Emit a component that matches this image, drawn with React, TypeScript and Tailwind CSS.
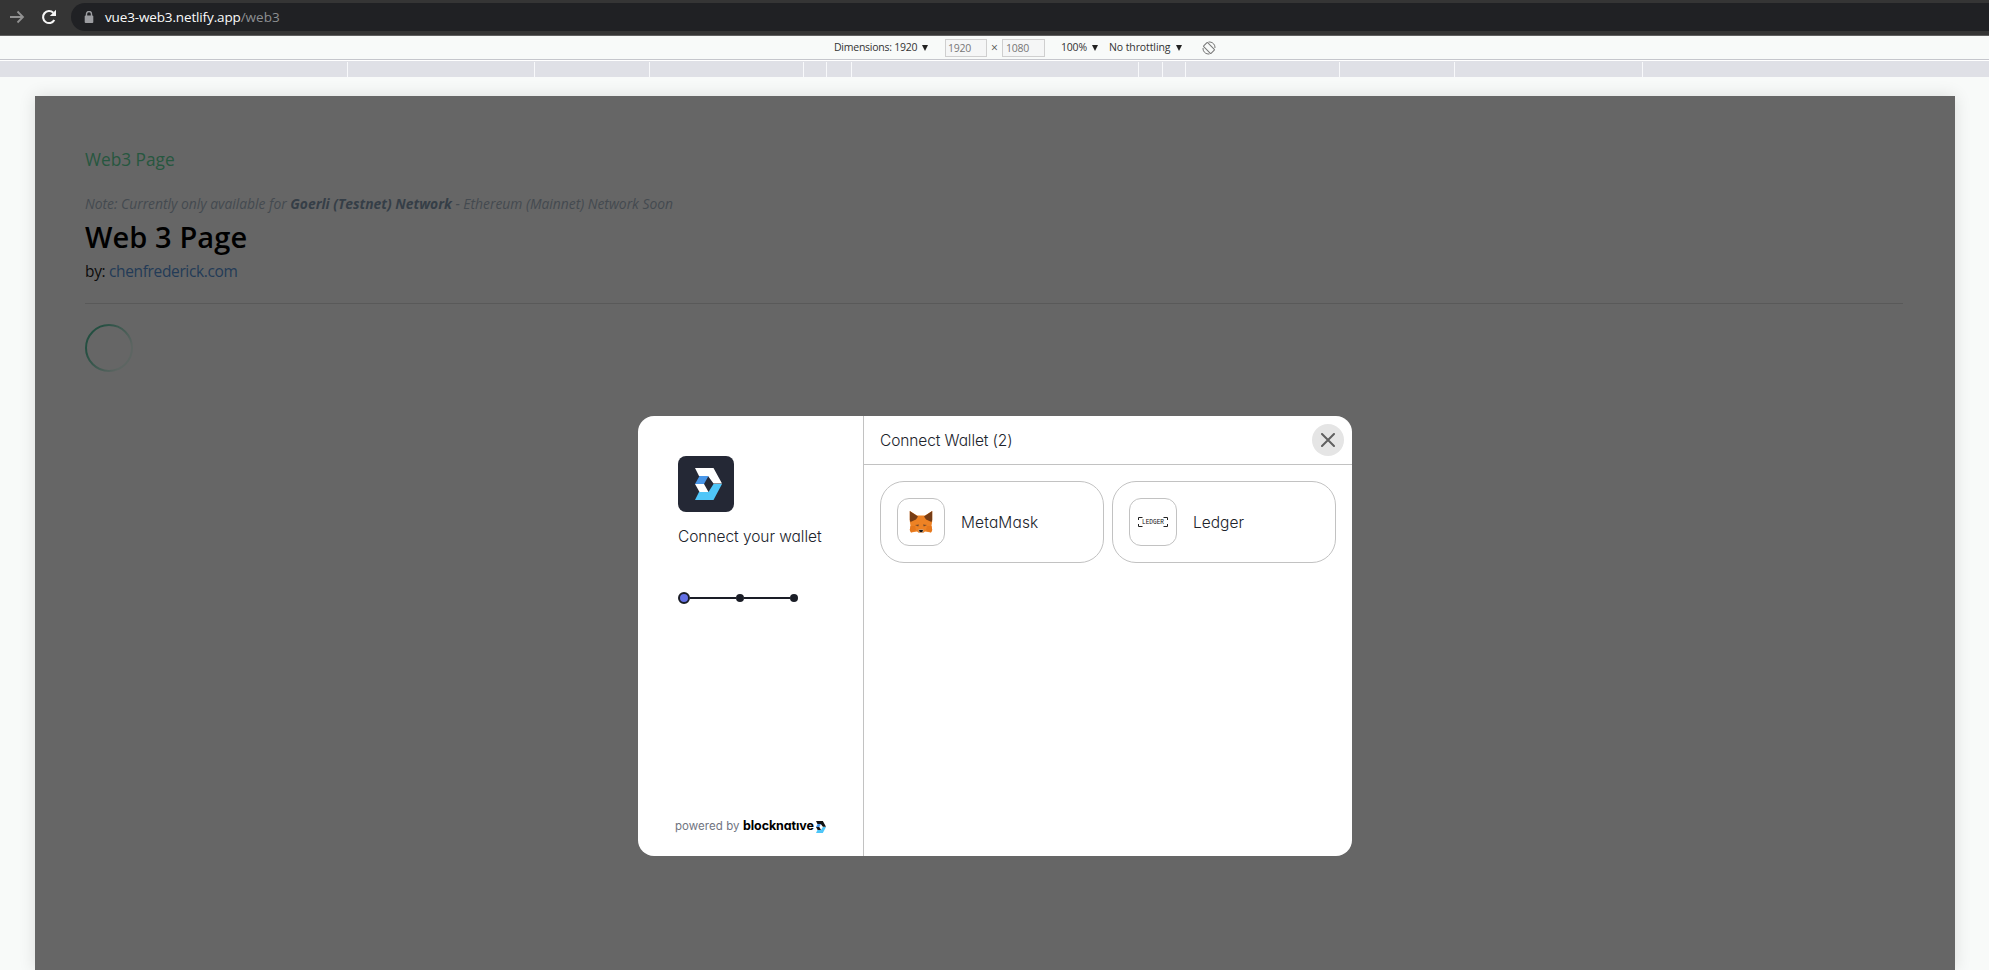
import React from "react";

const rulerMarks = [347, 534, 649, 803, 826, 851, 1138, 1162, 1185, 1339, 1454, 1642];

function BlocknativeMark({ className, top }: { className: string; top: string }) {
  return (
    <svg viewBox="0 0 27 32" className={className} aria-hidden="true">
      <path d="M0 0H18.500L27 15.500H18.500L13 8H4Z" fill={top} />
      <path d="M0 32H18.500L27 16H18.500L13.500 24H4Z" fill="#4fc6f8" />
      <path d="M4.500 8H13.500L9 16H0Z" fill="#4896e8" />
      <path d="M0 16H9L13.500 24H4.500Z" fill={top} />
    </svg>
  );
}

function MetaMaskIcon() {
  return (
    <svg viewBox="0 0 24 24" className="h-6 w-6" aria-hidden="true">
      <path d="M.8 1L8 5.500H16L23.200 1V11L22.500 16L23.200 20L22 22.500L16 21.500L14 23H10L8 21.500L2 22.500L.8 20L1.500 16L.8 11Z" fill="#ee8224" />
      <path d="M.8 1L9 6.500L7 9.500L1.500 12L.8 10Z M23.200 1L15 6.500L17 9.500L22.500 12L23.200 10Z" fill="#763d16" />
      <path d="M6 15L10 14.500L9.200 16.500Z M18 15L14 14.500L14.800 16.500Z" fill="#7a4c2a" />
      <path d="M1.500 16H6L7 20L2 22.500L.8 20Z M22.500 16H18L17 20L22 22.500L23.200 20Z" fill="#e5771c" />
      <path d="M9.500 19.500H14.500L14 22.800H10Z" fill="#c0ad9e" />
      <path d="M10 20H14L13.200 22H10.800Z" fill="#161616" />
    </svg>
  );
}

function LedgerIcon() {
  return (
    <svg viewBox="0 0 30 10" className="h-[10px] w-[30px]" aria-hidden="true">
      <path d="M4.500 .5H.5V3M.5 7V9.500H4.500M25.500 .5H29.500V3M29.500 7V9.500H25.500" fill="none" stroke="#222" />
      <text x="4" y="7.200" fontFamily="Liberation Mono, monospace" fontSize="6.500" textLength="22" lengthAdjust="spacingAndGlyphs" fill="#111">LEDGER</text>
    </svg>
  );
}

function WalletCard({ name, children, nameClass }: { name: string; children: React.ReactNode; nameClass: string }) {
  return (
    <button className="flex h-[82px] w-[224px] items-center gap-4 rounded-[24px] border border-[#c2c2c2] px-4 text-left">
      <span className="flex h-12 w-12 items-center justify-center rounded-xl border border-[#c2c2c2]">{children}</span>
      <span className={nameClass}>{name}</span>
    </button>
  );
}

function AddressBar() {
  return (
    <div className="flex h-9 shrink-0 items-start border-b border-[#5f5f5f] bg-[#353535]">
      <svg viewBox="0 0 16 16" className="ml-[9px] mt-[9px] h-4 w-4" fill="none" stroke="#929292" strokeWidth="1.800">
        <path d="M1 8H14M8.500 2.500L14 8L8.500 13.500" />
      </svg>
      <svg viewBox="0 0 16 16" className="ml-4 mt-[9px] h-4 w-4" aria-hidden="true">
        <path d="M13.300 11A6 6 0 1 1 12.300 3.800" fill="none" stroke="#f5f5f5" strokeWidth="2.100" />
        <path d="M15 .8V7H8.800Z" fill="#f5f5f5" />
      </svg>
      <div className="ml-[14px] mt-[3px] flex h-7 flex-1 items-center rounded-l-full bg-[#202124] pl-[13px] font-['Open_Sans',sans-serif] text-[13.500px]">
        <svg viewBox="0 0 10 12" className="mr-[11px] h-3 w-[10px]" aria-hidden="true">
          <path d="M2.500 5V3A2.500 2.500 0 0 1 7.500 3V5" fill="none" stroke="#9c9da1" strokeWidth="1.400" />
          <rect x=".7" y="4.500" width="8.600" height="7.500" rx="1" fill="#9c9da1" />
        </svg>
        <span className="tracking-[-0.14px] text-[#fafafa]">vue3-web3.netlify.app</span>
        <span className="tracking-[0px] text-[#8d8f92]">/web3</span>
      </div>
    </div>
  );
}

function Caret() {
  return (
    <svg viewBox="0 0 6 6" className="h-[6px] w-[6px]" aria-hidden="true">
      <path d="M0 0H6L3 6Z" fill="#222" />
    </svg>
  );
}

function DeviceToolbar() {
  return (
    <div className="flex h-[23px] shrink-0 items-center pl-[834px] pt-px font-['Open_Sans',sans-serif] text-[10.500px] text-[#333]">
      <div className="flex w-[111px] items-center gap-1"><span className="w-[84px] whitespace-nowrap tracking-[-0.25px]">Dimensions: 1920</span><Caret /></div>
      <div className="h-[18px] w-[42px] border border-[#cfcfcf] bg-[#f5f6f6] pl-[2px] leading-[17px] tracking-[-0.25px] text-[#777]">1920</div>
      <span className="w-[15px] text-center text-[12px] text-[#555]">×</span>
      <div className="h-[18px] w-[43px] border border-[#cfcfcf] bg-[#f5f6f6] pl-[3px] leading-[17px] tracking-[-0.25px] text-[#777]">1080</div>
      <div className="ml-4 flex w-[48px] items-center"><span className="w-[31px] tracking-[-0.2px]">100%</span><Caret /></div>
      <div className="flex items-center"><span className="w-[67px] whitespace-nowrap tracking-[-0.1px]">No throttling</span><Caret /></div>
      <svg viewBox="0 0 14 14" className="ml-5 h-[14px] w-[14px]" fill="none" stroke="#777" aria-hidden="true">
        <rect x="4.200" y="1.800" width="5.600" height="10.400" rx=".5" transform="rotate(-45 7 7)" />
        <path d="M6.500 1H8A5.500 5.500 0 0 1 13 7M7.500 13H6A5.500 5.500 0 0 1 1 7" />
      </svg>
    </div>
  );
}

function Ruler() {
  return (
    <div className="relative h-[18px] shrink-0 border-t border-[#c5c6cc] bg-[#dfe0e6]">
      <div className="h-px bg-white" />
      {rulerMarks.map((x) => (
        <span key={x} className="absolute top-[2px] h-4 w-px bg-[#f8f9fb]" style={{ left: x }} />
      ))}
    </div>
  );
}

function ConnectModal() {
  return (
    <div className="absolute left-[603px] top-[320px] flex h-[440px] w-[714px] overflow-hidden rounded-2xl bg-white font-['Inter',sans-serif] text-[#20232b] [font-feature-settings:'cv11']">
      <aside className="flex w-[226px] flex-col border-r border-[#c2c2c2] pl-10 pt-10">
        <div className="flex h-14 w-14 items-center justify-center rounded-lg bg-[#242835] pl-1">
          <BlocknativeMark className="h-8 w-[27px]" top="#ffffff" />
        </div>
        <div className="mt-[13px] whitespace-nowrap text-[15.500px] font-light leading-6 tracking-[-0.05px]">Connect your wallet</div>
        <div className="mt-[43px] flex items-center">
          <span className="h-3 w-3 rounded-full border-2 border-[#1a1d26] bg-[#6370e5]" />
          <span className="h-[2px] w-[46px] bg-[#1a1d26]" />
          <span className="h-2 w-2 rounded-full bg-[#1a1d26]" />
          <span className="h-[2px] w-[46px] bg-[#1a1d26]" />
          <span className="h-2 w-2 rounded-full bg-[#1a1d26]" />
        </div>
        <div className="-ml-[3px] mb-[20px] mt-auto flex items-center">
          <span className="w-[68px] whitespace-nowrap text-[11.500px] tracking-[0.05px] text-[#707481]">powered by</span>
          <span className="w-[73px] whitespace-nowrap text-[12.500px] font-bold tracking-[-0.1px] text-black">blocknatıve</span>
          <BlocknativeMark className="h-3 w-[10px]" top="#111111" />
        </div>
      </aside>
      <section className="flex flex-1 flex-col">
        <header className="flex h-[49px] items-center justify-between border-b border-[#c2c2c2] pl-4 pr-2">
          <h2 className="pt-[2px] text-[15.500px] font-light tracking-[-0.1px]">Connect Wallet (2)</h2>
          <button className="flex h-8 w-8 items-center justify-center rounded-full bg-[#e5e5e5]" aria-label="Close">
            <svg viewBox="0 0 14 14" className="h-[14px] w-[14px]" stroke="#606060" strokeWidth="2" strokeLinecap="round">
              <path d="M1 1L13 13M13 1L1 13" />
            </svg>
          </button>
        </header>
        <div className="flex gap-2 px-4 pt-4">
          <WalletCard name="MetaMask" nameClass="pt-[2px] text-[15.500px] font-light tracking-[0.15px]"><MetaMaskIcon /></WalletCard>
          <WalletCard name="Ledger" nameClass="pt-[2px] text-[15.500px] font-light"><LedgerIcon /></WalletCard>
        </div>
      </section>
    </div>
  );
}

export default function App() {
  return (
    <div className="flex h-[970px] w-[1989px] flex-col overflow-hidden bg-[#f8faf9]">
      <AddressBar />
      <DeviceToolbar />
      <Ruler />
      <main className="relative ml-[35px] mt-[19px] h-[874px] w-[1920px] shrink-0 bg-[#666666] px-[50px] pt-[50px] font-['Open_Sans',sans-serif] shadow-[0_0_16px_rgba(0,0,0,0.12)]">
        <nav className="h-[45px] text-[17.300px] leading-7 text-[#26573f]">Web3 Page</nav>
        <p className="h-[27px] whitespace-nowrap text-[13.850px] italic leading-[26px] text-[#444a50]">
          Note: Currently only available for <strong className="text-[#353e47]">Goerli (Testnet) Network</strong> - Ethereum (Mainnet) Network Soon
        </p>
        <h1 className="h-[39px] whitespace-nowrap text-[29px] font-semibold leading-[38px] tracking-[0.1px] text-black">Web 3 Page</h1>
        <p className="h-[46px] text-[15.500px] leading-[29px] tracking-[-0.35px] text-[#0c0c0c]">by: <a className="text-[#233b57]">chenfrederick.com</a></p>
        <hr className="mr-[2px] border-[#595959]" />
        <svg viewBox="0 0 48 48" className="mt-5 h-12 w-12" fill="none" strokeWidth="2" aria-hidden="true">
          <defs>
            <linearGradient id="spin" x1="0" y1="0.200" x2="1" y2="0.800">
              <stop offset="0.150" stopColor="#244f41" />
              <stop offset="0.850" stopColor="#5d6562" />
            </linearGradient>
          </defs>
          <circle cx="24" cy="24" r="23" stroke="url(#spin)" />
        </svg>
        <ConnectModal />
      </main>
    </div>
  );
}
